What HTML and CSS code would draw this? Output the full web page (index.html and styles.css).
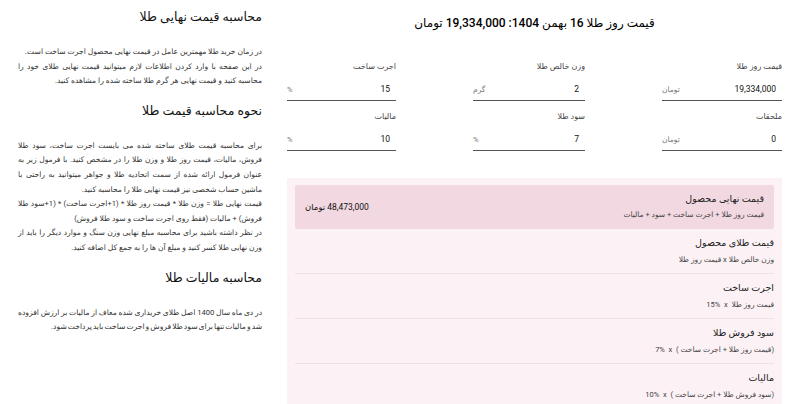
FILE: index.html
```html
<!DOCTYPE html>
<html lang="fa" dir="rtl">
<head>
    <meta charset="UTF-8">
    <meta name="viewport" content="width=device-width, initial-scale=1.0">
    <title>محاسبه قیمت طلا</title>
    <link rel="stylesheet" href="styles.css">
</head>
<body>
    <div class="page">
        <!-- Calculator -->
        <div class="calculator">
            <h1 class="price-title">قیمت روز طلا 16 بهمن 1404: 19,334,000 تومان</h1>

            <div class="fields">
                <div class="field">
                    <div class="field-label">قیمت روز طلا</div>
                    <div class="field-input"><span class="value">19,334,000</span><span class="unit">تومان</span></div>
                </div>
                <div class="field">
                    <div class="field-label">وزن خالص طلا</div>
                    <div class="field-input"><span class="value">2</span><span class="unit">گرم</span></div>
                </div>
                <div class="field">
                    <div class="field-label">اجرت ساخت</div>
                    <div class="field-input"><span class="value">15</span><span class="unit">%</span></div>
                </div>
                <div class="field">
                    <div class="field-label">ملحقات</div>
                    <div class="field-input"><span class="value">0</span><span class="unit">تومان</span></div>
                </div>
                <div class="field">
                    <div class="field-label">سود طلا</div>
                    <div class="field-input"><span class="value">7</span><span class="unit">%</span></div>
                </div>
                <div class="field">
                    <div class="field-label">مالیات</div>
                    <div class="field-input"><span class="value">10</span><span class="unit">%</span></div>
                </div>
            </div>

            <!-- Result -->
            <div class="result-card">
                <div class="total">
                    <div>
                        <div class="total-title">قیمت نهایی محصول</div>
                        <div class="total-formula">قیمت روز طلا + اجرت ساخت + سود + مالیات</div>
                    </div>
                    <div class="total-amount">48,473,000 تومان</div>
                </div>
                <div class="row">
                    <div class="row-title">قیمت طلای محصول</div>
                    <div class="row-formula">وزن خالص طلا <bdi>x</bdi> قیمت روز طلا</div>
                </div>
                <div class="row">
                    <div class="row-title">اجرت ساخت</div>
                    <div class="row-formula">قیمت روز طلا &nbsp;<bdi>x</bdi>&nbsp; <bdi>15%</bdi></div>
                </div>
                <div class="row">
                    <div class="row-title">سود فروش طلا</div>
                    <div class="row-formula">(قیمت روز طلا + اجرت ساخت ) &nbsp;<bdi>x</bdi>&nbsp; <bdi>7%</bdi></div>
                </div>
                <div class="row">
                    <div class="row-title">مالیات</div>
                    <div class="row-formula">(سود فروش طلا + اجرت ساخت ) &nbsp;<bdi>x</bdi>&nbsp; <bdi>10%</bdi></div>
                </div>
            </div>
        </div>

        <!-- Article -->
        <div class="article">
            <h2>محاسبه قیمت نهایی طلا</h2>
            <p>در زمان خرید طلا مهمترین عامل در قیمت نهایی محصول اجرت ساخت است.<br>
            در این صفحه با وارد کردن اطلاعات لازم میتوانید قیمت نهایی طلای خود را محاسبه کنید و قیمت نهایی هر گرم طلا ساخته شده را مشاهده کنید.</p>

            <h2>نحوه محاسبه قیمت طلا</h2>
            <p>برای محاسبه قیمت طلای ساخته شده می بایست اجرت ساخت، سود طلا فروش، مالیات، قیمت روز طلا و وزن طلا را در مشخص کنید. با فرمول زیر به عنوان فرمول ارائه شده از سمت اتحادیه طلا و جواهر میتوانید به راحتی با ماشین حساب شخصی نیز قیمت نهایی طلا را محاسبه کنید.<br>
            قیمت نهایی طلا = وزن طلا * قیمت روز طلا * (1+اجرت ساخت) * (1+سود طلا فروش) + مالیات (فقط روی اجرت ساخت و سود طلا فروش)<br>
            در نظر داشته باشید برای محاسبه مبلغ نهایی وزن سنگ و موارد دیگر را باید از وزن نهایی طلا کسر کنید و مبلغ آن ها را به جمع کل اضافه کنید.</p>

            <h2>محاسبه مالیات طلا</h2>
            <p class="tight">در دی ماه سال 1400 اصل طلای خریداری شده معاف از مالیات بر ارزش افزوده شد و مالیات تنها برای سود طلا فروش و اجرت ساخت باید پرداخت شود.</p>
        </div>
    </div>
</body>
</html>
```

FILE: styles.css
```css
body {
    font-family: Roboto, "DejaVu Sans", sans-serif;
    margin: 0;
    padding: 0;
    background: #fff;
    color: #222;
    direction: rtl;
}

.page {
    display: flex;
    gap: 25px;
    padding: 0 18px;
}

/* calculator column */
.calculator {
    flex: 0 0 495px;
}

.price-title {
    margin: 12px 0 0;
    font-size: 12px;
    line-height: 22px;
    font-weight: 500;
    text-align: center;
    color: #000;
}

.fields {
    display: grid;
    grid-template-columns: 120px 112px 109px;
    justify-content: space-between;
    margin-top: 26px;
}

.field {
    height: 50px;
}

.field-label {
    font-size: 8px;
    line-height: 14px;
    color: #444;
}

.field-input {
    display: flex;
    justify-content: space-between;
    align-items: center;
    height: 22px;
    margin-top: 4px;
    padding-right: 6px;
    border-bottom: 1px solid #555;
}

.field-input .value {
    font-size: 8.5px;
    color: #111;
}

.field-input .unit {
    font-size: 7.5px;
    color: #777;
}

/* result card */
.result-card {
    margin-top: 18px;
    padding: 7px 8px 0;
    background: #fcf2f6;
}

.total {
    display: flex;
    justify-content: space-between;
    align-items: center;
    height: 44px;
    box-sizing: border-box;
    padding: 5px 10px 7px;
    background: #f2d8e1;
    border-radius: 2px;
}

.total-title {
    font-size: 9.5px;
    line-height: 15px;
    color: #222;
}

.total-formula {
    margin-top: 2px;
    font-size: 7.5px;
    line-height: 13px;
    color: #444;
}

.total-amount {
    padding-top: 2px;
    font-size: 8.5px;
    color: #111;
}

.row {
    padding: 6px 0;
    border-bottom: 1px solid #efe0e6;
}

.row:last-child {
    border-bottom: none;
}

.row-title {
    font-size: 9.5px;
    line-height: 16px;
    color: #222;
}

.row-formula {
    margin-top: 2px;
    font-size: 7.5px;
    line-height: 14px;
    color: #444;
}

/* article column */
.article {
    flex: 1;
}

.article h2 {
    margin: 12px 0 18px;
    font-size: 12.5px;
    line-height: 20px;
    font-weight: normal;
    color: #111;
}

.article h2:first-child {
    margin-top: 7px;
}

.article p {
    margin: 0;
    font-size: 7.6px;
    line-height: 14.6px;
    text-align: justify;
    color: #333;
}

.article p.tight {
    word-spacing: -0.8px;
}
```
